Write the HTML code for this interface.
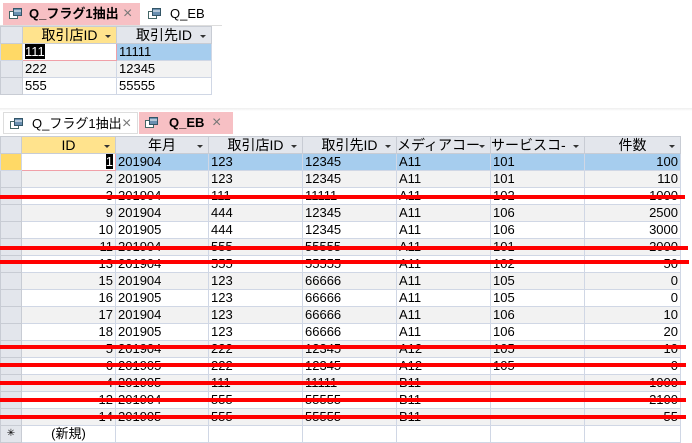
<!DOCTYPE html>
<html><head><meta charset="utf-8"><style>
body{margin:0;width:692px;height:431px;overflow:hidden;background:#fff;position:relative;font-family:"Liberation Sans","Noto Sans CJK JP",sans-serif;color:#000}
.abs{position:absolute}
.tab{position:absolute;height:22px;font-size:13px;line-height:22px;box-sizing:border-box;white-space:nowrap}
.ico{position:absolute;left:6px;top:5px;width:13px;height:11px}
.x{position:absolute;color:#777;font-size:16px;top:0}
table{border-collapse:collapse;table-layout:fixed;position:absolute;font-size:13px}
td{border:1px solid #d0d7e5;height:16px;padding:0 2px;line-height:16px;white-space:nowrap;overflow:hidden}
th{border:1px solid #c8ccd4;height:16px;padding:0;font-weight:normal;background:#e3e6ec;font-size:14px;line-height:16px;position:relative;white-space:nowrap;overflow:hidden}
th .dd{position:absolute;right:5px;top:8px;border-left:3px solid transparent;border-right:3px solid transparent;border-top:3px solid #333}
th.act{background:#ffe38d}
td.sel{background:#e3e6ec;border-color:#c8ccd4}
td.cur{background:#ffd966}
tr.alt td{background:#f2f2f2}
tr.alt td.sel{background:#e3e6ec}
tr.blue td{background:#a6cdee}
tr.blue td.cur{background:#ffd966}
td.r{text-align:right}
.red{position:absolute;left:0;height:4px;background:#f00}
</style></head><body>
<div class="tab" style="left:3px;top:3px;width:137px;background:#f7c0c4;font-weight:bold;padding-left:26px"><svg class="ico" viewBox="0 0 13 11"><rect x="0.5" y="3.5" width="8" height="7" fill="#fff" stroke="#466"/><rect x="4.5" y="0.5" width="8" height="7" fill="#6a8fb0" stroke="#356"/><line x1="5" y1="3" x2="12" y2="3" stroke="#fff"/></svg>Q_フラグ1抽出<span class="x" style="left:120px;font-weight:normal">×</span></div>
<div class="tab" style="left:142px;top:3px;width:80px;background:#fff;padding-left:28px"><svg class="ico" viewBox="0 0 13 11"><rect x="0.5" y="3.5" width="8" height="7" fill="#fff" stroke="#466"/><rect x="4.5" y="0.5" width="8" height="7" fill="#6a8fb0" stroke="#356"/><line x1="5" y1="3" x2="12" y2="3" stroke="#fff"/></svg>Q_EB</div>
<div class="abs" style="left:0;top:25px;width:222px;height:1px;background:#ddd"></div>
<table style="left:0;top:26px;width:211px">
<colgroup><col style="width:22px"><col style="width:94px"><col style="width:95px"></colgroup>
<tr><th style="background:#e3e6ec"></th><th class="act">取引店ID<span class="dd"></span></th><th>取引先ID<span class="dd"></span></th></tr>
<tr class="blue"><td class="cur"></td><td style="background:#fff;border:1px solid #f0a0a8"><span style="background:#000;color:#fff">111</span></td><td>11111</td></tr>
<tr class="alt"><td class="sel"></td><td>222</td><td>12345</td></tr>
<tr><td class="sel"></td><td>555</td><td>55555</td></tr>
</table>
<div class="abs" style="left:0;top:108px;width:692px;height:3px;background:linear-gradient(#eee,#fff)"></div>
<div class="tab" style="left:3px;top:112px;width:135px;background:#fff;border:1px solid #ddd;padding-left:28px"><svg class="ico" viewBox="0 0 13 11"><rect x="0.5" y="3.5" width="8" height="7" fill="#fff" stroke="#466"/><rect x="4.5" y="0.5" width="8" height="7" fill="#6a8fb0" stroke="#356"/><line x1="5" y1="3" x2="12" y2="3" stroke="#fff"/></svg>Q_フラグ1抽出<span class="x" style="left:118px">×</span></div>
<div class="tab" style="left:139px;top:112px;width:94px;background:#f7c0c4;font-weight:bold;padding-left:30px"><svg class="ico" viewBox="0 0 13 11"><rect x="0.5" y="3.5" width="8" height="7" fill="#fff" stroke="#466"/><rect x="4.5" y="0.5" width="8" height="7" fill="#6a8fb0" stroke="#356"/><line x1="5" y1="3" x2="12" y2="3" stroke="#fff"/></svg>Q_EB<span class="x" style="left:73px;font-weight:normal">×</span></div>
<table style="left:0;top:136px;width:680px">
<colgroup><col style="width:21px"><col style="width:94px"><col style="width:93px"><col style="width:94px"><col style="width:94px"><col style="width:94px"><col style="width:94px"><col style="width:96px"></colgroup>
<tr><th></th><th class="act">ID<span class="dd"></span></th><th>年月<span class="dd"></span></th><th>取引店ID<span class="dd"></span></th><th>取引先ID<span class="dd"></span></th><th style="text-align:left">メディアコー<span class="dd"></span></th><th style="text-align:left">サービスコ-<span class="dd"></span></th><th>件数<span class="dd"></span></th></tr>
<tr class="blue"><td class="cur"></td><td class="r" style="background:#fff;border:1px solid #f0a0a8"><span style="background:#000;color:#fff">1</span></td><td>201904</td><td>123</td><td>12345</td><td>A11</td><td>101</td><td class="r">100</td></tr>
<tr class="alt"><td class="sel"></td><td class="r">2</td><td>201905</td><td>123</td><td>12345</td><td>A11</td><td>101</td><td class="r">110</td></tr>
<tr><td class="sel"></td><td class="r">3</td><td>201904</td><td>111</td><td>11111</td><td>A11</td><td>102</td><td class="r">1000</td></tr>
<tr class="alt"><td class="sel"></td><td class="r">9</td><td>201904</td><td>444</td><td>12345</td><td>A11</td><td>106</td><td class="r">2500</td></tr>
<tr><td class="sel"></td><td class="r">10</td><td>201905</td><td>444</td><td>12345</td><td>A11</td><td>106</td><td class="r">3000</td></tr>
<tr class="alt"><td class="sel"></td><td class="r">11</td><td>201904</td><td>555</td><td>55555</td><td>A11</td><td>101</td><td class="r">2000</td></tr>
<tr><td class="sel"></td><td class="r">13</td><td>201904</td><td>555</td><td>55555</td><td>A11</td><td>102</td><td class="r">50</td></tr>
<tr class="alt"><td class="sel"></td><td class="r">15</td><td>201904</td><td>123</td><td>66666</td><td>A11</td><td>105</td><td class="r">0</td></tr>
<tr><td class="sel"></td><td class="r">16</td><td>201905</td><td>123</td><td>66666</td><td>A11</td><td>105</td><td class="r">0</td></tr>
<tr class="alt"><td class="sel"></td><td class="r">17</td><td>201904</td><td>123</td><td>66666</td><td>A11</td><td>106</td><td class="r">10</td></tr>
<tr><td class="sel"></td><td class="r">18</td><td>201905</td><td>123</td><td>66666</td><td>A11</td><td>106</td><td class="r">20</td></tr>
<tr class="alt"><td class="sel"></td><td class="r">5</td><td>201904</td><td>222</td><td>12345</td><td>A12</td><td>105</td><td class="r">10</td></tr>
<tr><td class="sel"></td><td class="r">6</td><td>201905</td><td>222</td><td>12345</td><td>A12</td><td>105</td><td class="r">0</td></tr>
<tr class="alt"><td class="sel"></td><td class="r">4</td><td>201905</td><td>111</td><td>11111</td><td>B11</td><td></td><td class="r">1000</td></tr>
<tr><td class="sel"></td><td class="r">12</td><td>201904</td><td>555</td><td>55555</td><td>B11</td><td></td><td class="r">2100</td></tr>
<tr class="alt"><td class="sel"></td><td class="r">14</td><td>201905</td><td>555</td><td>55555</td><td>B11</td><td></td><td class="r">55</td></tr>
<tr><td class="sel" style="font-size:10px;text-align:center">✳</td><td style="text-align:center">(新規)</td><td></td><td></td><td></td><td></td><td></td><td></td></tr>
</table>
<div class="red" style="top:195px;width:685px"></div>
<div class="red" style="top:246px;width:688px"></div>
<div class="red" style="top:260px;width:689px"></div>
<div class="red" style="top:345px;width:686px"></div>
<div class="red" style="top:363px;width:686px"></div>
<div class="red" style="top:381px;width:686px"></div>
<div class="red" style="top:398px;width:686px"></div>
<div class="red" style="top:415px;width:686px"></div>
</body></html>
